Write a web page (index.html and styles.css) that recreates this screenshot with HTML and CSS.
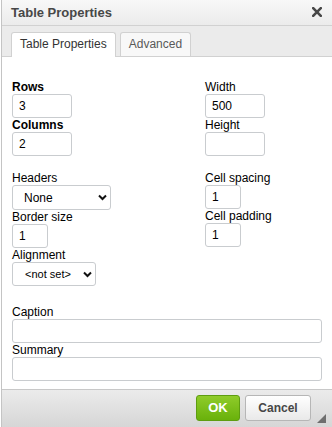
FILE: index.html
```html
<!DOCTYPE html>
<html>
<head>
<meta charset="utf-8">
<link rel="stylesheet" href="styles.css">
</head>
<body>
<div class="dialog">
  <div class="titlebar">
    <span class="title">Table Properties</span>
    <svg class="close" width="10" height="10" viewBox="0 0 10 10"><path d="M1.2 1.2 L8.8 8.8 M8.8 1.2 L1.2 8.8" stroke="#474747" stroke-width="2.6" stroke-linecap="square"/></svg>
  </div>
  <div class="tabs">
    <div class="tab active">Table Properties</div>
    <div class="tab">Advanced</div>
  </div>
  <div class="contents">
    <div class="grid">
      <div class="col">
        <label class="lbl req">Rows</label>
        <div class="input w60">3</div>
        <label class="lbl req">Columns</label>
        <div class="input w60">2</div>
      </div>
      <div class="col">
        <label class="lbl">Width</label>
        <div class="input w60">500</div>
        <label class="lbl">Height</label>
        <div class="input w60"></div>
      </div>
    </div>
    <div class="grid second">
      <div class="col">
        <label class="lbl">Headers</label>
        <div class="select sel-headers"><span class="sel-text">None</span><svg width="9" height="7" viewBox="0 0 9 7"><path d="M1 1.5 L4.5 5 L8 1.5" fill="none" stroke="#111" stroke-width="2"/></svg></div>
        <label class="lbl">Border size</label>
        <div class="input w36">1</div>
        <label class="lbl">Alignment</label>
        <div class="select sel-align"><span class="sel-text">&lt;not set&gt;</span><svg width="9" height="7" viewBox="0 0 9 7"><path d="M1 1.5 L4.5 5 L8 1.5" fill="none" stroke="#111" stroke-width="2"/></svg></div>
      </div>
      <div class="col">
        <label class="lbl">Cell spacing</label>
        <div class="input w36">1</div>
        <label class="lbl">Cell padding</label>
        <div class="input w36">1</div>
      </div>
    </div>
    <div class="wide">
      <label class="lbl">Caption</label>
      <div class="input full"></div>
      <label class="lbl">Summary</label>
      <div class="input full"></div>
    </div>
  </div>
  <div class="footer">
    <div class="btn ok">OK</div>
    <div class="btn cancel">Cancel</div>
    <div class="resize"></div>
  </div>
</div>
</body>
</html>
```

FILE: styles.css
```css
html, body {
  margin: 0;
  padding: 0;
  background: #fff;
}
body {
  width: 332px;
  height: 427px;
  overflow: hidden;
  font-family: "Liberation Sans", Arial, sans-serif;
  font-size: 12px;
  color: #000;
}
.dialog {
  margin-left: 1px;
  border-left: 1px solid #c4c4c4;
  height: 427px;
  display: flex;
  flex-direction: column;
  background: #fff;
}
.titlebar {
  height: 26px;
  box-sizing: border-box;
  border-bottom: 1px solid #d1d1d1;
  background: linear-gradient(#f8f8f8, #ebebeb);
  display: flex;
  align-items: center;
  justify-content: space-between;
  padding: 0 10px 0 9px;
}
.title {
  font-weight: bold;
  font-size: 13px;
  line-height: 15px;
  color: #474747;
}
.close {
  display: block;
  margin-top: -2px;
}
.tabs {
  height: 30px;
  box-sizing: border-box;
  background: #ebebeb;
  display: flex;
  align-items: flex-end;
  gap: 4px;
  padding-left: 9px;
}
.tab {
  height: 24px;
  box-sizing: border-box;
  border: 1px solid #d1d1d1;
  border-bottom: none;
  border-radius: 3px 3px 0 0;
  padding: 0 8px;
  line-height: 22px;
  color: #595959;
  background: #f8f8f8;
}
.tab.active {
  background: #fff;
  color: #333;
  height: 25px;
  margin-bottom: -1px;
  position: relative;
}
.contents {
  flex: 1;
  border-top: 1px solid #d1d1d1;
  padding: 23px 10px 0 10px;
}
.grid {
  display: grid;
  grid-template-columns: 193px 1fr;
}
.grid.second {
  margin-top: 15px;
}
.col {
  display: flex;
  flex-direction: column;
  align-items: flex-start;
}
.lbl {
  display: block;
  line-height: 14px;
  height: 14px;
  color: #000;
}
.lbl.req {
  font-weight: bold;
}
.input {
  box-sizing: border-box;
  height: 24px;
  border: 1px solid #c9cccf;
  border-radius: 3px;
  background: #fff;
  padding: 0 6px;
  line-height: 22px;
  color: #000;
  margin-bottom: 0;
}
.w60 { width: 60px; }
.w36 { width: 36px; }
.full { width: 310px; }
.select {
  box-sizing: border-box;
  height: 25px;
  border: 1px solid #c9cccf;
  border-radius: 3px;
  background: #fff;
  display: flex;
  align-items: center;
  justify-content: space-between;
  padding: 0 3px 0 10px;
  color: #000;
}
.sel-headers {
  width: 99px;
  padding-left: 11px;
}
.sel-align {
  width: 84px;
  height: 24px;
  padding-left: 12px;
  font-size: 11px;
  letter-spacing: 0;
}
.wide {
  margin-top: 19px;
}
.footer {
  height: 38px;
  box-sizing: border-box;
  border-top: 1px solid #c8c8c8;
  background: linear-gradient(#ebebeb, #d6d6d6);
  display: flex;
  justify-content: flex-end;
  align-items: flex-start;
  padding-top: 5px;
  padding-right: 6px;
  gap: 5px;
}
.btn {
  box-sizing: border-box;
  height: 26px;
  line-height: 24px;
  border-radius: 3px;
  font-weight: bold;
  text-align: center;
}
.ok {
  width: 44px;
  background: linear-gradient(#8fcc2a, #69b10b);
  border: 1px solid #5e9d10;
  color: #fff;
  font-size: 13px;
}
.cancel {
  width: 66px;
  background: linear-gradient(#ffffff, #e9e9e9);
  border: 1px solid #b6b6b6;
  color: #474747;
}
.resize {
  align-self: flex-end;
  width: 0;
  height: 0;
  border-style: solid;
  border-width: 0 0 9px 9px;
  border-color: transparent transparent #6e6e6e transparent;
  margin-bottom: 4px;
  margin-left: 1px;
}
```
